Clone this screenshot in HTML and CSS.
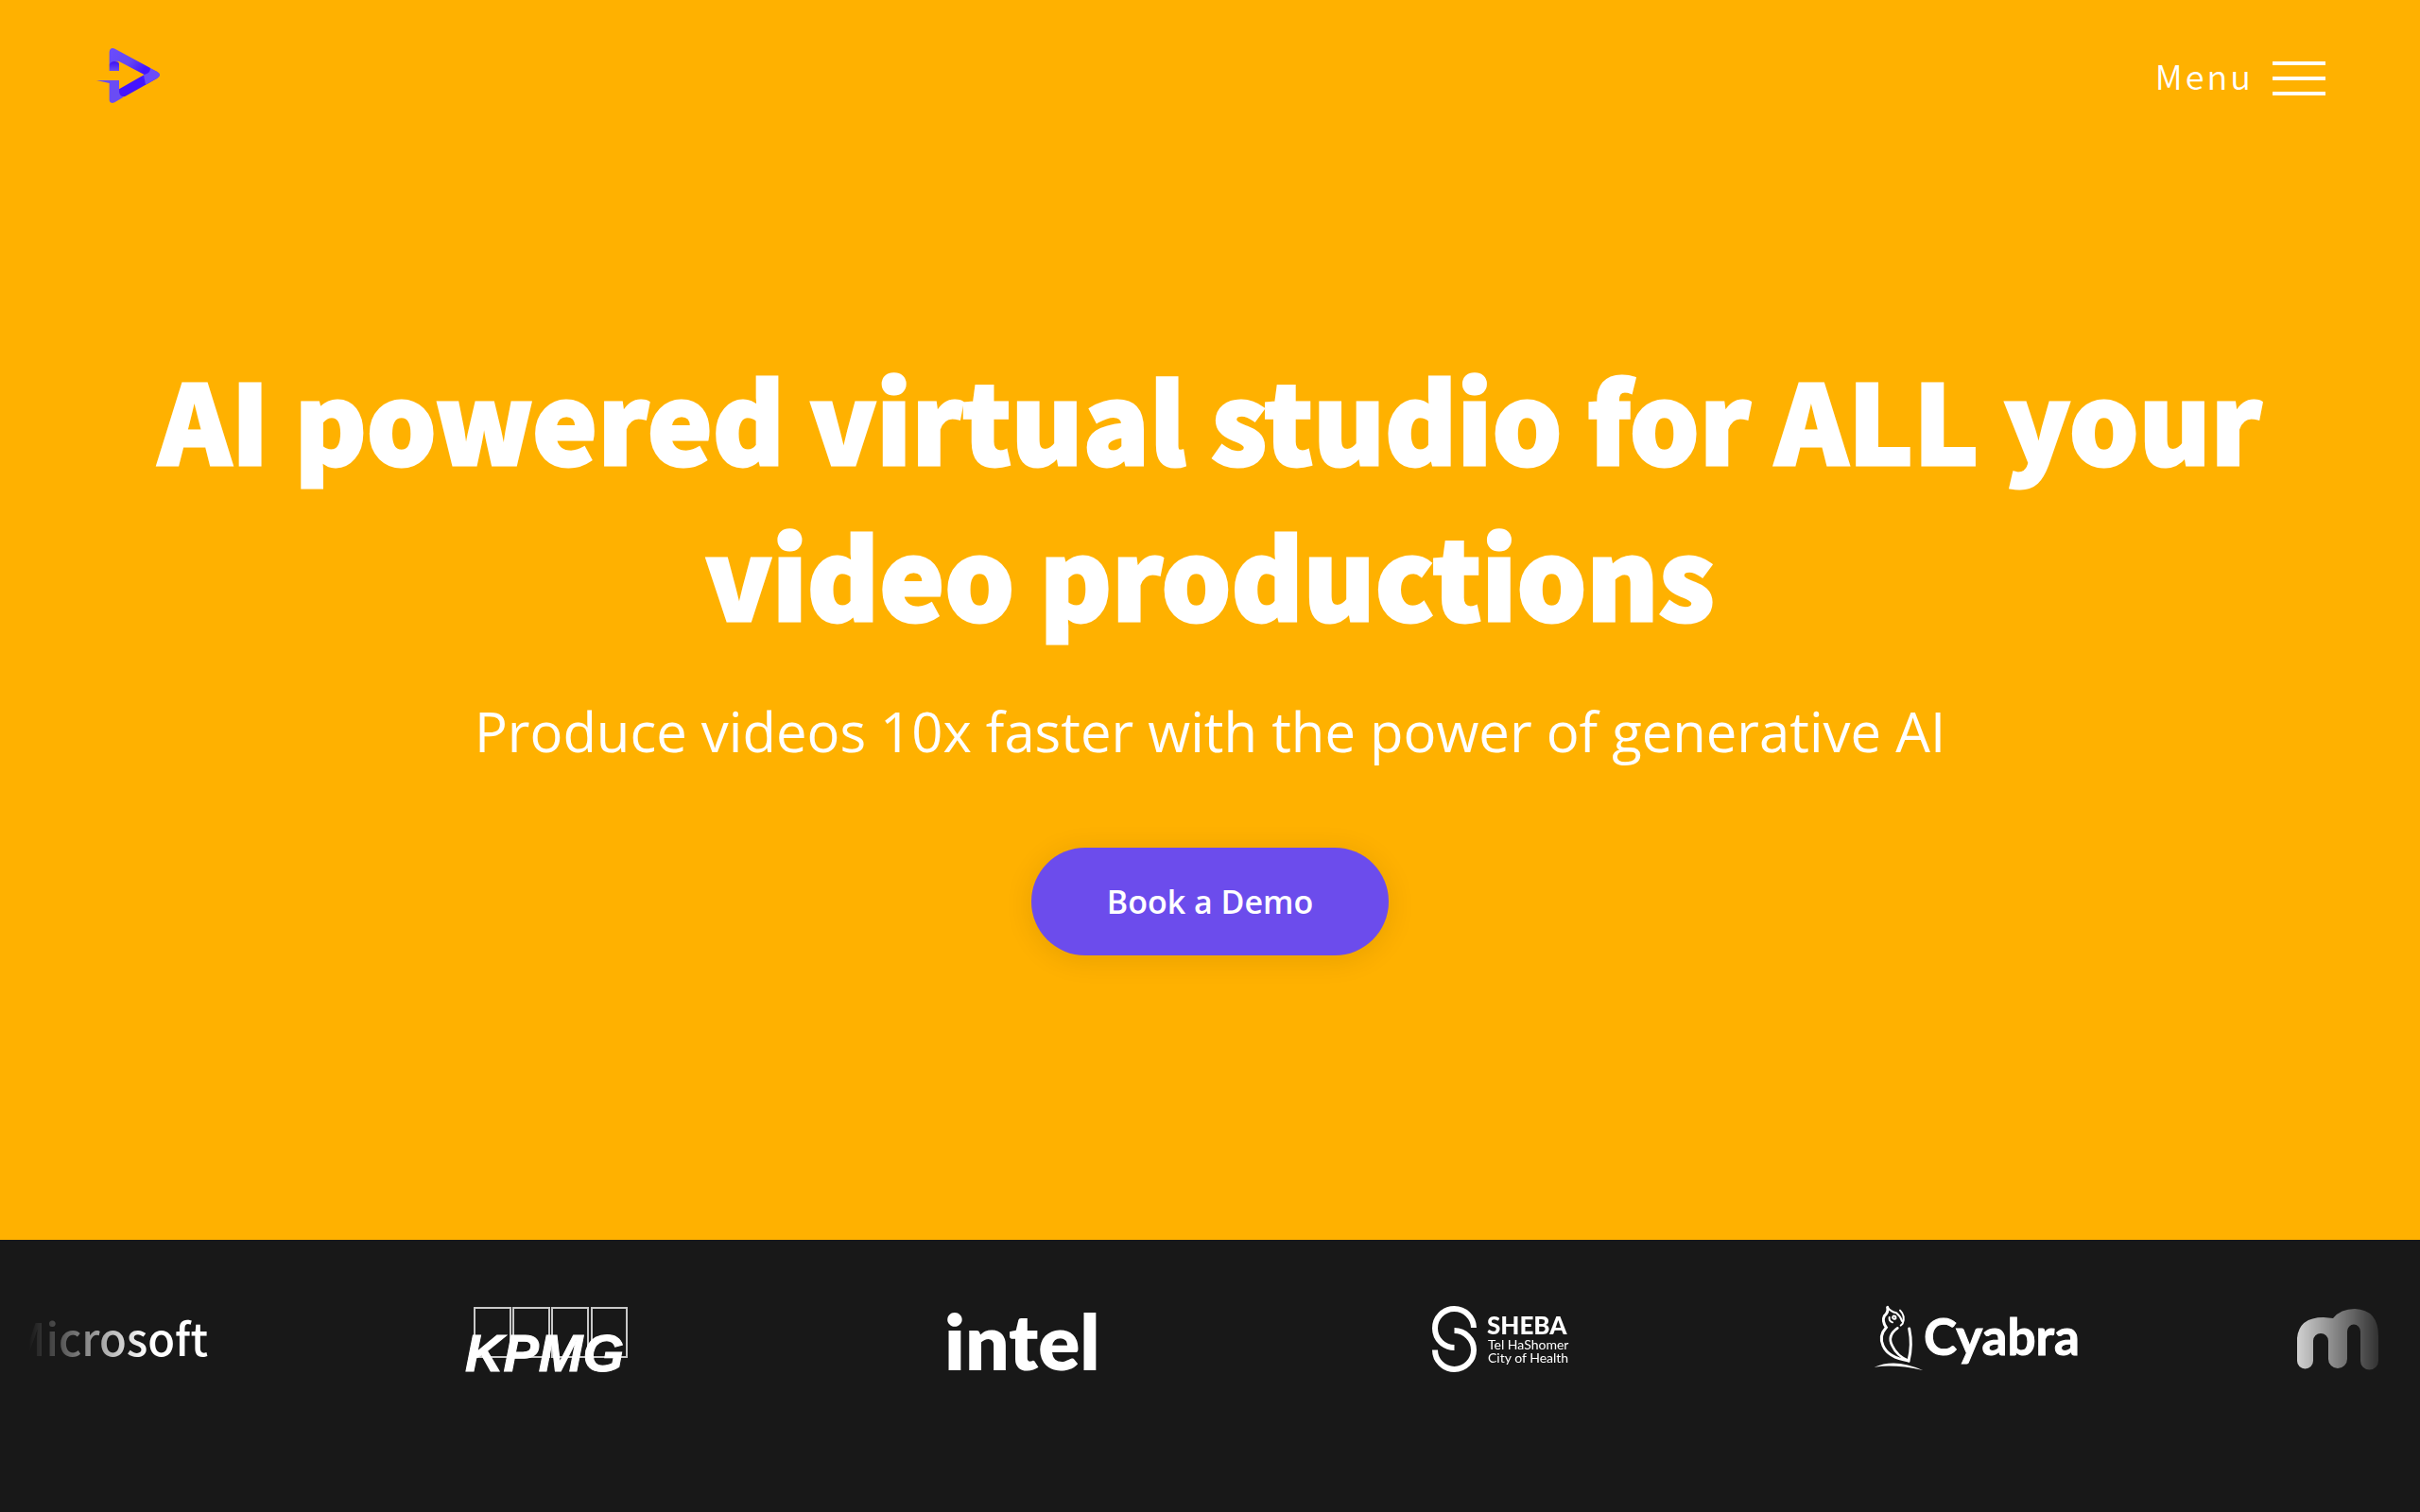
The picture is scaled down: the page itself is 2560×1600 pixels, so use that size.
FILE: index.html
```html
<!DOCTYPE html>
<html lang="en">
<head>
<meta charset="utf-8">
<meta name="viewport" content="width=device-width, initial-scale=1">
<title>AI powered virtual studio</title>
<link rel="stylesheet" href="styles.css">
</head>
<body>
<div class="hero">
  <header class="topbar">
    <a class="brand" href="#" aria-label="Home">
      <svg class="brand-mark" viewBox="36 30 204 180" aria-hidden="true">
        <defs>
          <linearGradient id="g1" x1="0" y1="0" x2="1" y2="0.5"><stop offset="0" stop-color="#6a4cff"/><stop offset="0.6" stop-color="#6448f0"/><stop offset="1" stop-color="#4414ff"/></linearGradient>
          <linearGradient id="g2" x1="0" y1="0" x2="0" y2="1"><stop offset="0" stop-color="#3e10f8"/><stop offset="1" stop-color="#6a4cf0"/></linearGradient>
          <linearGradient id="g3" x1="0" y1="1" x2="1" y2="0"><stop offset="0" stop-color="#4414ff"/><stop offset="0.6" stop-color="#4414ff"/><stop offset="1" stop-color="#6a4cf8"/></linearGradient>
        </defs>
        <path fill="#6a4cf4" d="M36 135 L108 135 L108 172 Q112 186 122 188 L94 205 Q77 211 77 196 L77 144 Z"/>
        <path fill="url(#g3)" d="M108 163 L188 117 L207 98 L228 107 Q246 118 228 129 L127 186 Q112 190 108 174 Z"/>
        <path fill="#6a4cfa" d="M206 95 L228 107 Q246 118 228 129 L192 149 L186 118 Z"/>
        <path fill="url(#g1)" d="M77 86 L77 45 Q79 29 95 35 L206 95 Q210 110 188 117 L108 75 Q92 72 77 86 Z"/>
        <path fill="url(#g2)" d="M77 105 L77 86 Q80 75 94 75 Q106 75 108 82 L108 105 Z"/>
      </svg>
    </a>
    <button class="menu" type="button">
      <span>Menu</span>
      <span class="bars" aria-hidden="true"><i></i><i></i><i></i></span>
    </button>
  </header>
  <main class="pitch">
    <h1 class="title">AI powered virtual studio for ALL your video productions</h1>
    <p class="subtitle">Produce videos 10x faster with the power of generative AI</p>
    <button class="cta" type="button">Book a Demo</button>
  </main>
</div>
<section class="clients" aria-label="Clients">
  <div class="track">
    <div class="slide">
      <svg class="logo" width="288" height="100" viewBox="0 0 288 100"><text class="ms" x="289" y="65" text-anchor="end">Microsoft</text></svg>
    </div>
    <div class="slide">
      <svg class="logo" width="180" height="100" viewBox="489 1370 180 100">
        <g fill="none" stroke="#c8c8c8" stroke-width="2"><path d="M502 1384h38v52h-38zM543 1384h38v52h-38zM584 1384h38v52h-38zM626 1384h37v52h-37z"/></g>
        <text class="kpmg" x="492" y="1451">KPMG</text>
      </svg>
    </div>
    <div class="slide">
      <svg class="logo" width="170" height="100" viewBox="998 1370 170 100"><text class="intel" x="999" y="1450">intel</text></svg>
    </div>
    <div class="slide">
      <svg class="logo" width="150" height="100" viewBox="1512 1370 150 100">
        <path fill="none" stroke="#fff" stroke-width="6" d="M1559 1405A20.5 20.5 0 1 0 1538.500 1426M1538.500 1408A20.5 20.5 0 1 1 1518 1428.500"/>
        <text class="sheba" x="1573" y="1412">SHEBA</text>
        <text class="sheba-sub" x="1574" y="1428">Tel HaShomer</text>
        <text class="sheba-sub" x="1574" y="1442">City of Health</text>
      </svg>
    </div>
    <div class="slide">
      <svg class="logo" width="220" height="100" viewBox="1981 1370 220 100">
        <g transform="translate(1970 1370) scale(.33333)" fill="none" stroke="#fff" stroke-linecap="round">
          <path stroke-width="9" d="M80 40 Q84 55 70 68 Q62 84 76 104 Q52 130 66 162 Q82 200 147 210 Q160 160 149 108"/>
          <path stroke-width="8" d="M112 106 Q78 130 95 162 Q110 195 147 210"/>
          <path stroke-width="6" d="M80 40 Q90 54 108 58 Q122 70 126 84 M86 72 Q84 84 96 88 M120 50 Q138 68 128 92 L122 98 M98 68 Q108 66 106 76 Q98 80 96 72"/>
          <path fill="#fff" stroke="none" d="M38 230 Q105 200 192 240 Q105 220 38 230Z"/>
        </g>
        <text class="cyabra" x="2035" y="1434">Cyabra</text>
      </svg>
    </div>
    <div class="slide">
      <svg class="logo" width="330" height="100" viewBox="2430 1370 330 100">
        <path fill="#fff" d="M2430 1416 Q2432 1394 2458 1394 L2468 1395 Q2476 1385 2491 1385 Q2516 1386 2516 1414 V1440 A9.500 9.500 0 0 1 2497 1440 V1409 A6.500 7 0 0 0 2483 1409 V1438 A10 10 0 0 1 2463 1438 V1419 A8 8 0 0 0 2447 1419 V1440 A8.500 8.500 0 0 1 2430 1440 Z"/>
      </svg>
    </div>
  </div>
</section>
</body>
</html>
```
FILE: styles.css
```css
* { box-sizing: border-box; }

body {
  margin: 0;
  min-height: 100vh;
  display: flex;
  flex-direction: column;
  background: #181818;
  color: #fff;
  font-family: "Open Sans", sans-serif;
}

button {
  border: 0;
  color: inherit;
  cursor: pointer;
}

.hero {
  min-height: 82vh;
  display: flex;
  flex-direction: column;
  background: #ffb100;
}

.topbar {
  display: flex;
  justify-content: space-between;
  align-items: flex-start;
  padding: 50px 100px 0 102px;
}

.brand-mark {
  display: block;
  width: 68px;
  height: 60px;
}

.menu {
  display: flex;
  align-items: flex-start;
  gap: 20px;
  padding: 0;
  background: none;
  font: 350 36px/58px "Noto Sans CJK JP", sans-serif;
  letter-spacing: 3px;
}

.bars {
  display: grid;
  gap: 12px;
  padding-top: 15px;
}

.bars i {
  width: 56px;
  height: 4px;
  background: #fff;
}

.pitch {
  flex: 1;
  display: flex;
  flex-direction: column;
  align-items: center;
  padding: 249px 100px 200px;
  text-align: center;
}

.title {
  margin: 0;
  font: 900 116px/165px "Noto Sans CJK JP", sans-serif;
  -webkit-text-stroke: 3px #fff;
}

.subtitle {
  margin: 37px 0 0;
  font-size: 58px;
  line-height: 96px;
}

.cta {
  margin-top: 75px;
  padding: 0 80px;
  height: 114px;
  border-radius: 57px;
  background: #6c4cec;
  box-shadow: 0 4px 30px rgba(0, 0, 0, 0.1);
  font: 600 34px/48px "Open Sans", sans-serif;
}

.clients {
  margin: 0 30px;
  padding-top: 58px;
  overflow: hidden;
  -webkit-mask-image: linear-gradient(to right, transparent, #000 5%, #000 95%, transparent);
  mask-image: linear-gradient(to right, transparent, #000 5%, #000 95%, transparent);
}

.track {
  display: flex;
  gap: 4px;
  margin-left: -205px;
  margin-right: 205px;
}

.slide {
  flex: 0 0 500px;
  display: flex;
  justify-content: center;
}

.logo {
  display: block;
  fill: #fff;
  overflow: visible;
}

.ms { font: 500 47px "Noto Sans CJK JP", sans-serif; }
.kpmg { font: italic 700 56px "Liberation Sans", sans-serif; stroke: #fff; stroke-width: 1px; }
.intel { font: 800 82px Lato, sans-serif; }
.sheba { font: 900 26px Lato, sans-serif; }
.sheba-sub { font: 400 14px Lato, sans-serif; }
.cyabra { font: 700 53px Lato, sans-serif; stroke: #fff; stroke-width: 1px; }
```
